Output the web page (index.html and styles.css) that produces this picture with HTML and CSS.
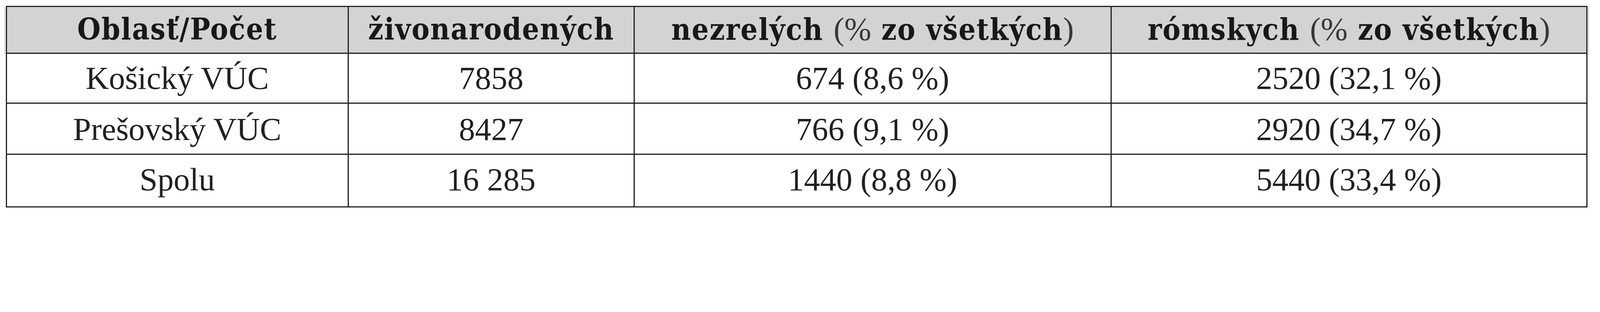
FILE: index.html
```html
<!DOCTYPE html>
<html lang="sk">
<head>
<meta charset="utf-8">
<title>Oblasť/Počet</title>
<link rel="stylesheet" href="styles.css">
</head>
<body>
<table class="data">
  <colgroup>
    <col class="c1">
    <col class="c2">
    <col class="c3">
    <col class="c4">
  </colgroup>
  <thead>
    <tr class="head">
      <th>Oblasť/Počet</th>
      <th>živonarodených</th>
      <th>nezrelých <span class="thin">(%</span> zo všetkých<span class="thin">)</span></th>
      <th>rómskych <span class="thin">(%</span> zo všetkých<span class="thin">)</span></th>
    </tr>
  </thead>
  <tbody>
    <tr class="r1">
      <td>Košický VÚC</td>
      <td>7858</td>
      <td>674 (8,6 %)</td>
      <td>2520 (32,1 %)</td>
    </tr>
    <tr class="r2">
      <td>Prešovský VÚC</td>
      <td>8427</td>
      <td>766 (9,1 %)</td>
      <td>2920 (34,7 %)</td>
    </tr>
    <tr class="r3">
      <td>Spolu</td>
      <td>16 285</td>
      <td>1440 (8,8 %)</td>
      <td>5440 (33,4 %)</td>
    </tr>
  </tbody>
</table>
</body>
</html>
```

FILE: styles.css
```css
/* One design unit = 1/5897 of the window width, so the table
   keeps the proportions of the 5897px-wide design at any width. */
:root {
  --u: calc(100vw / 5897);
}

html, body {
  margin: 0;
  background: #ffffff;
  overflow: hidden;
}

body {
  padding: calc(22 * var(--u)) 0 0 calc(21 * var(--u));
}

.data {
  border-collapse: separate;
  border-spacing: 0;
  table-layout: fixed;
  width: calc(5830 * var(--u));
  border-left: calc(5 * var(--u)) solid #231f20;
  border-top: calc(5 * var(--u)) solid #231f20;
}

.c1 { width: calc(1260 * var(--u)); }
.c2 { width: calc(1054 * var(--u)); }
.c3 { width: calc(1757 * var(--u)); }
.c4 { width: calc(1754 * var(--u)); }

.data th,
.data td {
  border-right: calc(5 * var(--u)) solid #231f20;
  border-bottom: calc(5 * var(--u)) solid #231f20;
  padding: 0;
  text-align: center;
  vertical-align: middle;
  line-height: 1;
  white-space: nowrap;
}

.data th {
  position: relative;
  background: #d1d3d4;
  color: #1a1718;
  font-family: "DejaVu Serif Condensed", "DejaVu Serif", serif;
  font-stretch: semi-condensed;
  font-weight: bold;
  font-size: calc(110 * var(--u));
  letter-spacing: calc(3 * var(--u));
  padding-bottom: calc(8 * var(--u));
}

.data th .thin {
  font-family: "Liberation Serif", serif;
  font-stretch: normal;
  font-weight: normal;
  font-size: calc(119 * var(--u));
  letter-spacing: 0;
  color: #3a3637;
}

.data th:first-child::before,
.data th:last-child::after {
  content: "";
  position: absolute;
  top: 0;
  bottom: calc(-5 * var(--u));
  width: calc(5 * var(--u));
  background: #d6d8d9;
}

.data th:first-child::before { left: calc(-10 * var(--u)); }
.data th:last-child::after { right: calc(-10 * var(--u)); }

.data td {
  background: #ffffff;
  color: #231f20;
  font-family: "Liberation Serif", serif;
  font-size: calc(119 * var(--u));
}

.head { height: calc(173 * var(--u)); }
.r1 { height: calc(184 * var(--u)); }
.r2 { height: calc(188 * var(--u)); }
.r3 { height: calc(195 * var(--u)); }

.r2 td { padding-top: calc(5 * var(--u)); }
.r3 td { padding-bottom: calc(9 * var(--u)); }
```
